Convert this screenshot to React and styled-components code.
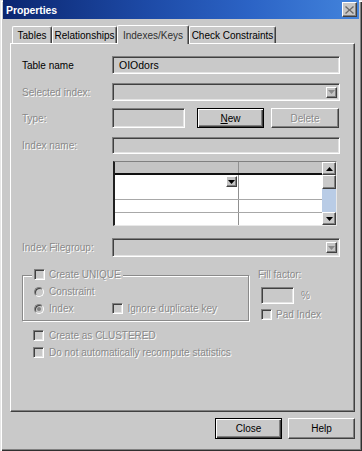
import React from 'react';
import styled, { createGlobalStyle, css } from 'styled-components';

const GlobalStyle = createGlobalStyle`
  html, body {
    margin: 0;
    padding: 0;
    background: #c9c9c9;
  }
  * { box-sizing: border-box; }
`;

const FACE = '#c9c9c9';

const raised = css`
  border-top: 1px solid #ffffff;
  border-left: 1px solid #ffffff;
  border-right: 1px solid #404040;
  border-bottom: 1px solid #404040;
  box-shadow: inset -1px -1px 0 #808080;
`;

const sunken = css`
  border-top: 1px solid #808080;
  border-left: 1px solid #808080;
  border-right: 1px solid #ffffff;
  border-bottom: 1px solid #ffffff;
  box-shadow: inset 1px 1px 0 #404040, inset -1px -1px 0 #e4e4e4;
`;

const disabledText = css`
  color: #8a8a8a;
  text-shadow: 1px 1px 0 #ffffff;
`;

const Window = styled.div`
  width: 362px;
  height: 451px;
  background: ${FACE};
  display: flex;
  flex-direction: column;
  padding: 0 3px 2px 3px;
  box-shadow: inset 1px 1px 0 #e6e6e6, inset 2px 2px 0 #ffffff,
    inset -1px -1px 0 #303030, inset -2px -2px 0 #808080;
  font-family: "Liberation Sans", Arial, sans-serif;
  font-size: 10px;
  color: #000;
  overflow: hidden;
`;

const TitleBar = styled.div`
  height: 19px;
  flex: none;
  display: flex;
  align-items: center;
  justify-content: space-between;
  padding: 0 2px 0 3px;
  background: linear-gradient(to right, #0b2670 0%, #1d4aa6 40%, #2c64c6 70%, #4384dc 100%);
`;

const Title = styled.span`
  color: #fff;
  font-weight: bold;
  font-size: 10.5px;
  letter-spacing: -0.1px;
`;

const CloseBtn = styled.div`
  width: 15px;
  height: 15px;
  background: #c6c6c6;
  ${raised};
  display: flex;
  align-items: center;
  justify-content: center;
`;

const Body = styled.div`
  flex: 1;
  display: flex;
  flex-direction: column;
  padding: 5px 4px 10px 7px;
`;

const TabStrip = styled.div`
  height: 19px;
  display: flex;
  align-items: flex-end;
  padding-left: 2px;
  position: relative;
  z-index: 1;
`;

const Tab = styled.div`
  width: ${p => p.$w}px;
  height: ${p => (p.$active ? 19 : 17)}px;
  margin-bottom: ${p => (p.$active ? -1 : 0)}px;
  padding-top: ${p => (p.$active ? 1 : 0)}px;
  background: ${FACE};
  border-top: 1px solid #fff;
  border-left: 1px solid #fff;
  border-right: 1px solid #404040;
  box-shadow: inset -1px 0 0 #808080;
  border-radius: 2px 2px 0 0;
  display: flex;
  align-items: center;
  justify-content: center;
  white-space: nowrap;
  color: ${p => (p.$active ? '#303030' : '#000')};
`;

const Panel = styled.div`
  height: 369px;
  background: ${FACE};
  border-top: 1px solid #fff;
  border-left: 1px solid #fff;
  border-right: 1px solid #404040;
  border-bottom: 1px solid #404040;
  box-shadow: inset -1px -1px 0 #808080;
  padding: 12px 14px 0 11px;
  display: flex;
  flex-direction: column;
`;

const Row = styled.div`
  display: flex;
  align-items: center;
  margin-top: ${p => p.$mt || 0}px;
  height: ${p => p.$h}px;
`;

const Label = styled.span`
  width: 90px;
  flex: none;
  white-space: nowrap;
  ${p => p.$disabled && disabledText};
`;

const Field = styled.div`
  ${sunken};
  background: ${p => p.$bg || FACE};
  width: ${p => (p.$w ? `${p.$w}px` : 'auto')};
  flex: ${p => (p.$w ? 'none' : 1)};
  height: 100%;
  display: flex;
  align-items: center;
  justify-content: space-between;
  padding: 0 2px 0 6px;
  font-size: 10.5px;
`;

const DropBtn = styled.div`
  width: 11px;
  height: 11px;
  background: #c4c4c4;
  ${raised};
  display: flex;
  align-items: center;
  justify-content: center;
`;

const Button = styled.div`
  width: ${p => p.$w}px;
  height: 100%;
  flex: none;
  margin-left: ${p => p.$ml || 0}px;
  background: ${FACE};
  display: flex;
  align-items: center;
  justify-content: center;
  ${p =>
    p.$default
      ? css`
          border: 1px solid #000;
          box-shadow: inset 1px 1px 0 #fff, inset -1px -1px 0 #404040, inset -2px -2px 0 #808080;
        `
      : raised};
  ${p => p.$disabled && disabledText};
`;

const Grid = styled.div`
  margin-left: 1px;
  width: 224px;
  height: 100%;
  display: flex;
  background: #fff;
  border-left: 2px solid #202020;
  border-top: 1px solid #808080;
  border-bottom: 1px solid #e8e8e8;
  border-right: 1px solid #e8e8e8;
`;

const GridBody = styled.div`
  flex: 1;
  display: flex;
  flex-direction: column;
`;

const GridRow = styled.div`
  height: ${p => p.$h}px;
  flex: none;
  display: flex;
  background: ${p => (p.$head ? '#c4c4c4' : '#fff')};
  border-bottom: ${p => (p.$head ? '2px solid #101010' : p.$last ? 'none' : '1px solid #a8a8a8')};
`;

const Cell = styled.div`
  width: ${p => (p.$w ? `${p.$w}px` : 'auto')};
  flex: ${p => (p.$w ? 'none' : 1)};
  border-right: ${p => (p.$w ? '1px solid #909090' : 'none')};
  display: flex;
  justify-content: flex-end;
  align-items: flex-start;
  padding: 1px 1px 0 0;
`;

const ScrollBar = styled.div`
  width: 14px;
  flex: none;
  display: flex;
  flex-direction: column;
  background: #b9cce6;
`;

const ScrollBtn = styled.div`
  height: ${p => p.$h}px;
  flex: none;
  background: ${FACE};
  ${raised};
  display: flex;
  align-items: center;
  justify-content: center;
`;

const ScrollTrack = styled.div`
  flex: 1;
`;

const Lower = styled.div`
  display: flex;
  margin-top: 12px;
`;

const LeftCol = styled.div`
  width: 227px;
  flex: none;
  display: flex;
  flex-direction: column;
`;

const GroupBox = styled.div`
  margin-top: 6px;
  height: 46px;
  border: 1px solid #8a8a8a;
  box-shadow: inset 1px 1px 0 #fff, 1px 1px 0 #fff;
  position: relative;
  padding: 10px 0 0 11px;
  display: flex;
  flex-direction: column;
  gap: 6px;
`;

const Legend = styled.div`
  position: absolute;
  top: -7px;
  left: 9px;
  background: ${FACE};
  padding: 0 2px;
  display: flex;
  align-items: center;
  gap: 4px;
  ${disabledText};
`;

const Option = styled.div`
  display: flex;
  align-items: center;
  gap: ${p => p.$gap || 5}px;
  height: 11px;
  margin-left: ${p => p.$ml || 0}px;
  margin-top: ${p => p.$mt || 0}px;
  padding-left: ${p => p.$pl || 0}px;
  white-space: nowrap;
  ${disabledText};
`;

const CheckBox = styled.span`
  width: 11px;
  height: 11px;
  flex: none;
  background: ${FACE};
  ${sunken};
`;

const Radio = styled.span`
  width: 10px;
  height: 10px;
  flex: none;
  border-radius: 50%;
  background: ${FACE};
  border: 1px solid #808080;
  border-right-color: #fff;
  border-bottom-color: #fff;
  box-shadow: inset 1px 1px 0 #404040;
  display: flex;
  align-items: center;
  justify-content: center;
  &::after {
    content: '';
    width: 4px;
    height: 4px;
    border-radius: 50%;
    background: ${p => (p.$on ? '#808080' : 'transparent')};
  }
`;

const InlineRow = styled.div`
  display: flex;
  align-items: center;
`;

const StackBelow = styled.div`
  display: flex;
  flex-direction: column;
  gap: 6px;
  margin-top: 9px;
  padding-left: 11px;
`;

const RightCol = styled.div`
  margin-left: 9px;
  display: flex;
  flex-direction: column;
`;

const SmallLabel = styled.span`
  ${disabledText};
  white-space: nowrap;
`;

const FillRow = styled.div`
  display: flex;
  align-items: center;
  gap: 7px;
  margin-top: 7px;
  padding-left: 3px;
`;

const FillBox = styled.div`
  width: 33px;
  height: 17px;
  ${sunken};
  background: ${FACE};
`;

const Footer = styled.div`
  display: flex;
  justify-content: flex-end;
  height: 21px;
  margin-top: 6px;
  gap: 6px;
`;

const Arrow = ({ dir = 'down', color = '#000' }) => (
  <svg width="7" height="4" viewBox="0 0 7 4">
    {dir === 'down' ? (
      <path d="M0 0h7L3.5 4z" fill={color} />
    ) : (
      <path d="M0 4h7L3.5 0z" fill={color} />
    )}
  </svg>
);

const Combo = () => (
  <Field>
    <span />
    <DropBtn>
      <Arrow color="#8a8a8a" />
    </DropBtn>
  </Field>
);

export default function App() {
  return (
    <>
      <GlobalStyle />
      <Window>
        <TitleBar>
          <Title>Properties</Title>
          <CloseBtn>
            <svg width="9" height="8" viewBox="0 0 9 8">
              <path d="M1 0l3.5 3.2L8 0l1 1-3.5 3 3.5 3-1 1-3.5-3.2L1 8 0 7l3.5-3L0 1z" fill="#6a6a6a" />
            </svg>
          </CloseBtn>
        </TitleBar>
        <Body>
          <TabStrip>
            <Tab $w={40}>Tables</Tab>
            <Tab $w={65}>Relationships</Tab>
            <Tab $w={72} $active>Indexes/Keys</Tab>
            <Tab $w={87}>Check Constraints</Tab>
          </TabStrip>
          <Panel>
            <Row $h={18}>
              <Label>Table name</Label>
              <Field>OIOdors</Field>
            </Row>
            <Row $h={18} $mt={9}>
              <Label $disabled>Selected index:</Label>
              <Combo />
            </Row>
            <Row $h={20} $mt={7}>
              <Label $disabled>Type:</Label>
              <Field $w={73} />
              <Button $w={67} $ml={12} $default>
                <span><u>N</u>ew</span>
              </Button>
              <Button $w={68} $ml={7} $disabled>
                Delete
              </Button>
            </Row>
            <Row $h={17} $mt={9}>
              <Label $disabled>Index name:</Label>
              <Field />
            </Row>
            <Row $h={65} $mt={7}>
              <Label />
              <Grid>
                <GridBody>
                  <GridRow $h={13} $head>
                    <Cell $w={124} />
                    <Cell />
                  </GridRow>
                  <GridRow $h={25}>
                    <Cell $w={124}>
                      <DropBtn>
                        <Arrow />
                      </DropBtn>
                    </Cell>
                    <Cell />
                  </GridRow>
                  <GridRow $h={13}>
                    <Cell $w={124} />
                    <Cell />
                  </GridRow>
                  <GridRow $h={12} $last>
                    <Cell $w={124} />
                    <Cell />
                  </GridRow>
                </GridBody>
                <ScrollBar>
                  <ScrollBtn $h={13}>
                    <Arrow dir="up" />
                  </ScrollBtn>
                  <ScrollBtn $h={14} />
                  <ScrollTrack />
                  <ScrollBtn $h={13}>
                    <Arrow />
                  </ScrollBtn>
                </ScrollBar>
              </Grid>
            </Row>
            <Row $h={19} $mt={12}>
              <Label $disabled>Index Filegroup:</Label>
              <Combo />
            </Row>
            <Lower>
              <LeftCol>
                <GroupBox>
                  <Legend>
                    <CheckBox />
                    Create UNIQUE
                  </Legend>
                  <Option>
                    <Radio />
                    Constraint
                  </Option>
                  <InlineRow>
                    <Option>
                      <Radio $on />
                      Index
                    </Option>
                    <Option $ml={39} $gap={4}>
                      <CheckBox />
                      Ignore duplicate key
                    </Option>
                  </InlineRow>
                </GroupBox>
                <StackBelow>
                  <Option>
                    <CheckBox />
                    Create as CLUSTERED
                  </Option>
                  <Option>
                    <CheckBox />
                    Do not automatically recompute statistics
                  </Option>
                </StackBelow>
              </LeftCol>
              <RightCol>
                <SmallLabel>Fill factor:</SmallLabel>
                <FillRow>
                  <FillBox />
                  <SmallLabel>%</SmallLabel>
                </FillRow>
                <Option $mt={5} $pl={3} $gap={4}>
                  <CheckBox />
                  Pad Index
                </Option>
              </RightCol>
            </Lower>
          </Panel>
          <Footer>
            <Button $w={67} $default>Close</Button>
            <Button $w={67}>Help</Button>
          </Footer>
        </Body>
      </Window>
    </>
  );
}
